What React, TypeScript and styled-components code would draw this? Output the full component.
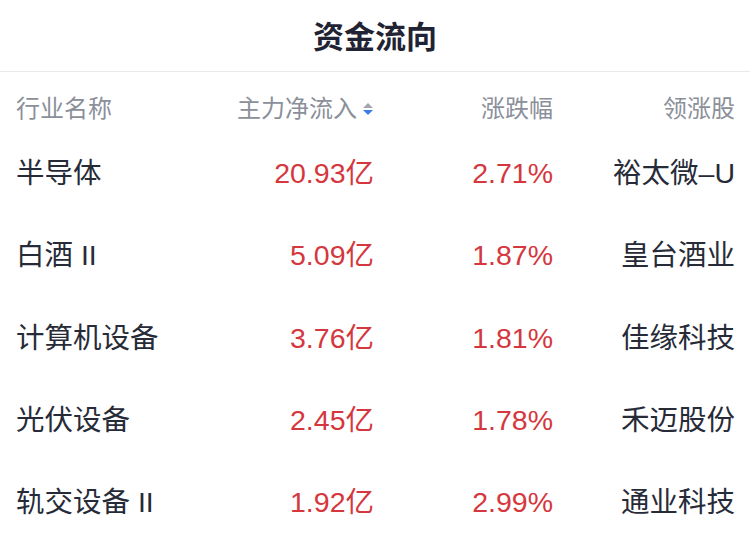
import React from "react";
import styled, { createGlobalStyle } from "styled-components";

const GlobalStyle = createGlobalStyle`
  html, body {
    margin: 0;
    padding: 0;
    background: #ffffff;
  }
  body {
    font-family: "Liberation Sans", "Noto Sans CJK SC", sans-serif;
    -webkit-font-smoothing: antialiased;
  }
`;

const Page = styled.div`
  width: 750px;
  background: #ffffff;
`;

const TitleBar = styled.div`
  height: 72px;
  border-bottom: 1px solid #e8e9ec;
  display: flex;
  align-items: center;
  justify-content: center;
  padding-bottom: 2px;
  box-sizing: border-box;
`;

const Title = styled.h1`
  margin: 0;
  font-size: 31px;
  font-weight: 600;
  color: #1f2333;
  letter-spacing: 0;
`;

const Grid = styled.div`
  display: grid;
  grid-template-columns: 178px 180px 179px 182px;
  padding: 0 15px 0 16px;
  align-items: center;
`;

const HeaderRow = styled(Grid)`
  height: 60px;
  padding-top: 14px;
  box-sizing: border-box;
`;

const HeadCell = styled.div<{ $align?: "left" | "right" }>`
  font-size: 24px;
  line-height: 26px;
  color: #8b8f9a;
  display: flex;
  align-items: center;
  justify-content: ${(p) => (p.$align === "right" ? "flex-end" : "flex-start")};
`;

const SortIcon = styled.svg`
  margin-left: 5px;
  width: 12px;
  height: 14px;
  flex: none;
`;

const DataRow = styled(Grid)`
  height: 82.25px;
`;

const Cell = styled.div<{ $align?: "left" | "right"; $red?: boolean }>`
  font-size: 28.5px;
  line-height: 34px;
  color: ${(p) => (p.$red ? "#d5373e" : "#272b38")};
  text-align: ${(p) => (p.$align === "right" ? "right" : "left")};
  white-space: nowrap;
`;

const rows = [
  { name: "半导体", flow: "20.93亿", pct: "2.71%", lead: "裕太微–U" },
  { name: "白酒 II", flow: "5.09亿", pct: "1.87%", lead: "皇台酒业" },
  { name: "计算机设备", flow: "3.76亿", pct: "1.81%", lead: "佳缘科技" },
  { name: "光伏设备", flow: "2.45亿", pct: "1.78%", lead: "禾迈股份" },
  { name: "轨交设备 II", flow: "1.92亿", pct: "2.99%", lead: "通业科技" },
];

export default function App() {
  return (
    <Page>
      <GlobalStyle />
      <TitleBar>
        <Title>资金流向</Title>
      </TitleBar>
      <HeaderRow>
        <HeadCell>行业名称</HeadCell>
        <HeadCell $align="right">
          主力净流入
          <SortIcon viewBox="0 0 12 14">
            <polygon points="6,1 11,6 1,6" fill="#a3a7b0" />
            <polygon points="1,8 11,8 6,13" fill="#3b7de9" />
          </SortIcon>
        </HeadCell>
        <HeadCell $align="right">涨跌幅</HeadCell>
        <HeadCell $align="right">领涨股</HeadCell>
      </HeaderRow>
      {rows.map((r) => (
        <DataRow key={r.name}>
          <Cell>{r.name}</Cell>
          <Cell $align="right" $red>
            {r.flow}
          </Cell>
          <Cell $align="right" $red>
            {r.pct}
          </Cell>
          <Cell $align="right">{r.lead}</Cell>
        </DataRow>
      ))}
    </Page>
  );
}
